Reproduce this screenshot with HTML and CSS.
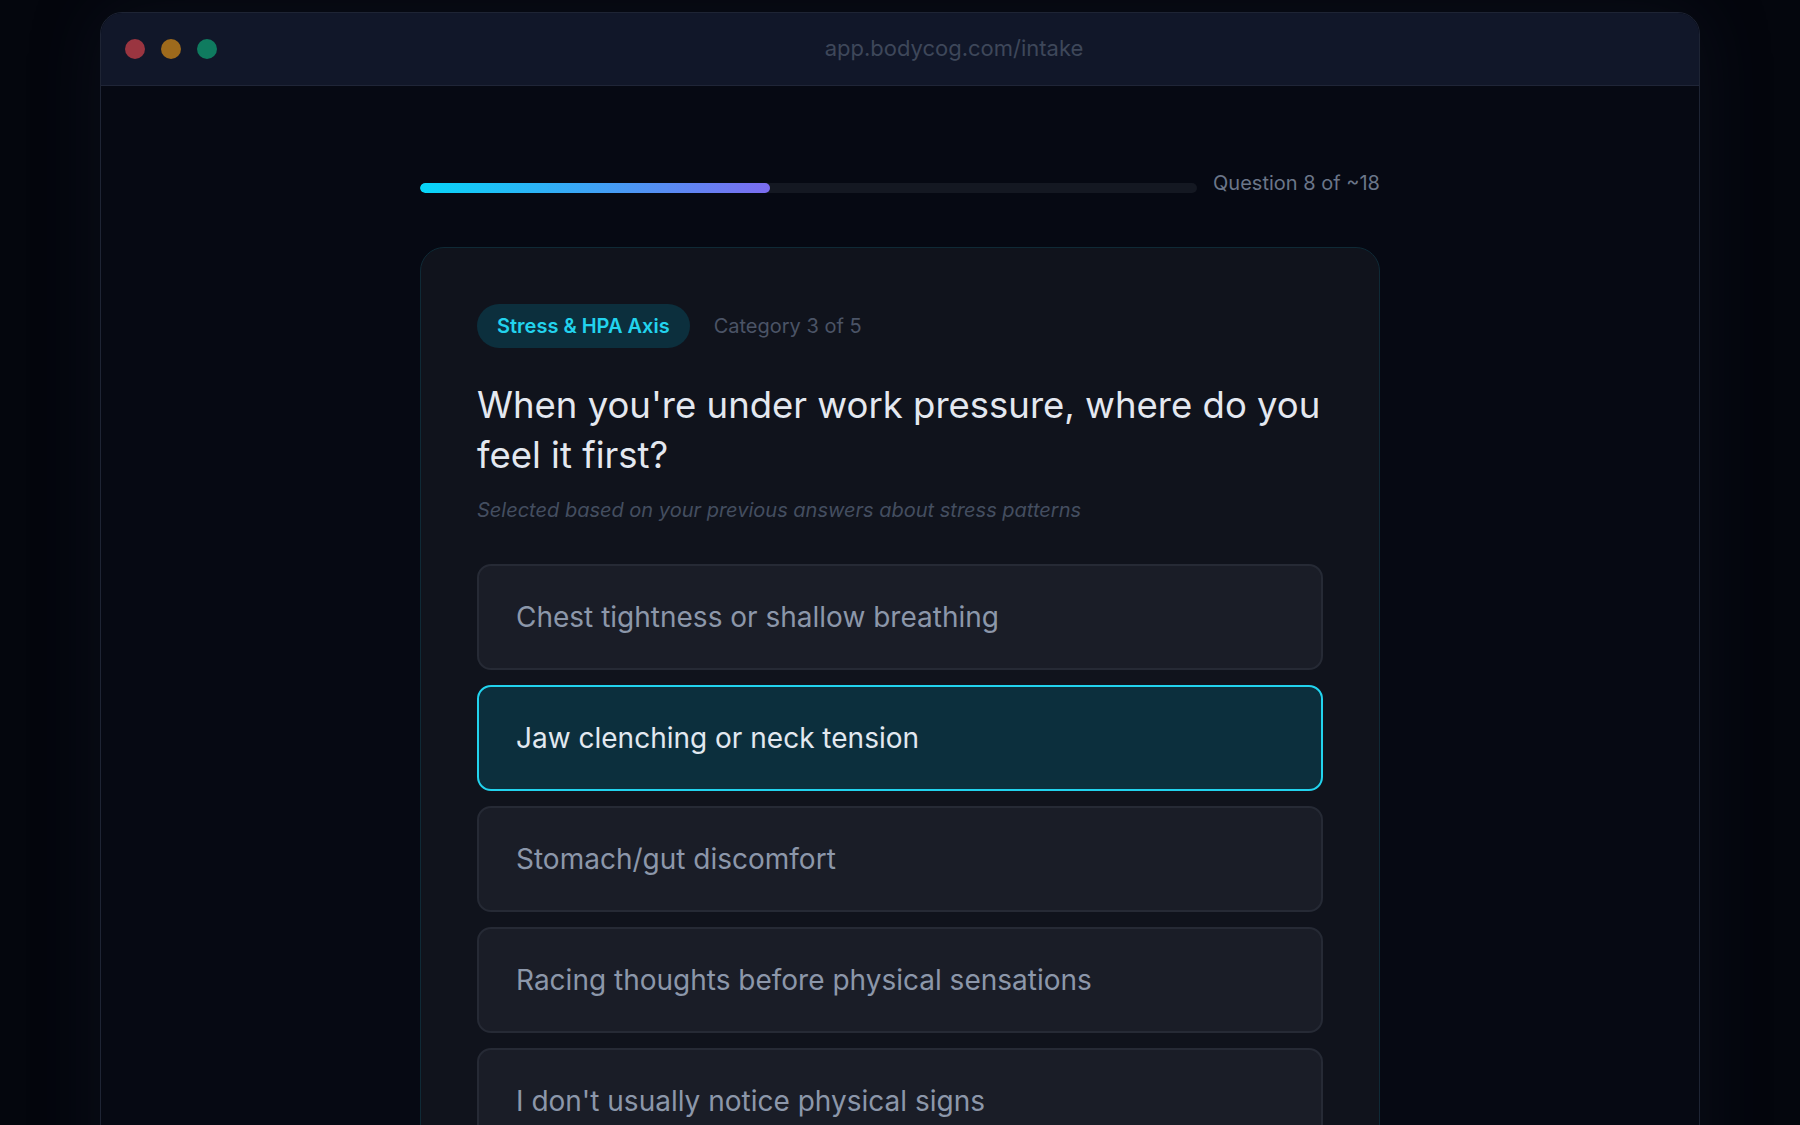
FILE: index.html
```html
<!DOCTYPE html>
<html lang="en">
<head>
    <meta charset="UTF-8">
    <meta name="viewport" content="width=device-width, initial-scale=1.0">
    <title>BodyCog Intake</title>
    <link rel="stylesheet" href="styles.css">
</head>
<body>
    <div class="window">
        <div class="titlebar">
            <div class="dots">
                <span class="dot dot-red"></span>
                <span class="dot dot-amber"></span>
                <span class="dot dot-green"></span>
            </div>
            <div class="url">app.bodycog.com/intake</div>
        </div>

        <main class="content">
            <div class="progress-row">
                <div class="track">
                    <div class="fill" style="width: 45%"></div>
                </div>
                <span class="progress-label">Question 8 of ~18</span>
            </div>

            <section class="card">
                <div class="card-meta">
                    <span class="pill">Stress &amp; HPA Axis</span>
                    <span class="category">Category 3 of 5</span>
                </div>
                <h1 class="question">When you're under work pressure, where do you feel it first?</h1>
                <p class="hint">Selected based on your previous answers about stress patterns</p>

                <div class="options">
                    <button class="option">Chest tightness or shallow breathing</button>
                    <button class="option selected">Jaw clenching or neck tension</button>
                    <button class="option">Stomach/gut discomfort</button>
                    <button class="option">Racing thoughts before physical sensations</button>
                    <button class="option">I don't usually notice physical signs</button>
                </div>
            </section>
        </main>
    </div>
</body>
</html>
```

FILE: styles.css
```css
html, body {
    margin: 0;
    height: 100%;
}

body {
    font-family: Inter, "Noto Sans", sans-serif;
    background-color: #04060d;
    overflow: hidden;
}

.window {
    width: 1600px;
    margin: 12px auto 0;
    height: 1200px;
    box-sizing: border-box;
    border: 1px solid #1e2434;
    border-radius: 22px 22px 0 0;
    background-color: #060913;
    box-shadow: 0 0 70px rgba(30, 40, 65, 0.25);
    overflow: hidden;
}

.titlebar {
    display: flex;
    align-items: center;
    gap: 16px;
    height: 72px;
    padding: 0 24px;
    background-color: #111729;
    border-bottom: 1px solid #1f2537;
}

.dots {
    display: flex;
    gap: 16px;
}

.dot {
    width: 20px;
    height: 20px;
    border-radius: 50%;
}

.dot-red {
    background-color: #9a3540;
}

.dot-amber {
    background-color: #9e6a1c;
}

.dot-green {
    background-color: #0f7b5f;
}

.url {
    flex: 1;
    text-align: center;
    font-size: 22px;
    padding-bottom: 2px;
    color: #3e475a;
}

.content {
    width: 960px;
    margin: 0 auto;
    padding-top: 82px;
}

.progress-row {
    display: flex;
    align-items: center;
    gap: 16px;
}

.track {
    flex: 1;
    height: 10px;
    border-radius: 5px;
    background-color: #141822;
    overflow: hidden;
}

.fill {
    height: 100%;
    border-radius: 5px;
    background: linear-gradient(90deg, #06d6f8, #3fa2f5 50%, #7c6cf0);
}

.progress-label {
    font-size: 20px;
    line-height: 30px;
    padding-bottom: 10px;
    color: #6b7689;
}

.card {
    margin-top: 39px;
    padding: 56px 56px 80px;
    background-color: #10131c;
    border: 1px solid #0f2a36;
    border-radius: 24px;
}

.card-meta {
    display: flex;
    align-items: center;
    gap: 24px;
}

.pill {
    padding: 10px 20px;
    line-height: 24px;
    font-size: 20px;
    font-weight: 600;
    color: #22d3ee;
    background-color: #0c2f3d;
    border-radius: 22px;
}

.category {
    font-size: 20px;
    color: #4b5466;
}

.question {
    margin: 32px 0 0;
    font-size: 36.5px;
    line-height: 50px;
    font-weight: 400;
    color: #e4e8f0;
}

.hint {
    margin: 16px 0 0;
    font-size: 20px;
    line-height: 28px;
    font-style: italic;
    color: #444e60;
}

.options {
    display: flex;
    flex-direction: column;
    gap: 15px;
    margin-top: 40px;
}

.option {
    display: block;
    width: 100%;
    text-align: left;
    padding: 30px 37px;
    font-family: inherit;
    font-size: 28px;
    line-height: 42px;
    color: #8c97aa;
    background-color: #1a1d27;
    border: 2px solid #262a35;
    border-radius: 14px;
    cursor: pointer;
}

.option.selected {
    color: #e2e8f0;
    background-color: #0c2f3d;
    border-color: #22d3ee;
}
```
